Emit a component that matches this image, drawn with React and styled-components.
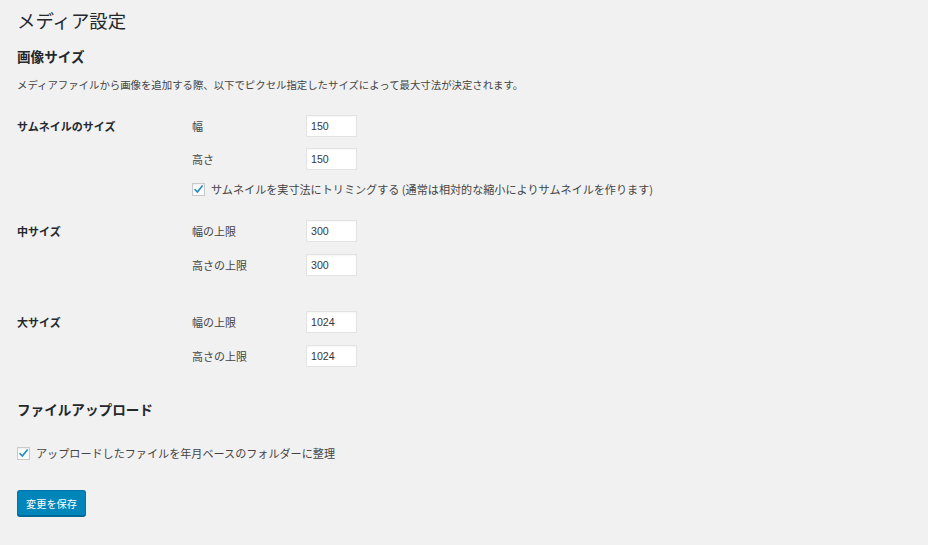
import React from "react";
import styled, { createGlobalStyle } from "styled-components";

const Global = createGlobalStyle`
  html, body { margin: 0; padding: 0; background: #f1f1f1; }
  body {
    font-family: "Noto Sans CJK JP", "Noto Sans", "Liberation Sans", sans-serif;
    color: #444;
    font-size: 10.4px;
  }
`;

const Page = styled.div`
  padding: 9px 17px 20px 17px;
  display: flex;
  flex-direction: column;
  width: 928px;
  height: 545px;
  box-sizing: border-box;
`;

const Title = styled.h1`
  margin: 0;
  font-size: 18.4px;
  line-height: 23px;
  font-weight: 400;
  color: #23282d;
`;

const SectionTitle = styled.h2`
  margin: ${(p) => p.$top}px 0 0 0;
  font-size: 13.6px;
  line-height: 18px;
  font-weight: 700;
  color: #23282d;
`;

const Description = styled.p`
  margin: 12px 0 0 0;
  font-size: 10.4px;
  line-height: 16px;
  color: #444;
`;

const SettingGroup = styled.div`
  display: flex;
  margin-top: ${(p) => p.$top}px;
`;

const GroupLabel = styled.div`
  width: 175px;
  flex: none;
  font-weight: 700;
  font-size: 11px;
  line-height: 22px;
  color: #23282d;
`;

const Fields = styled.div`
  display: flex;
  flex-direction: column;
  gap: ${(p) => p.$gap}px;
`;

const FieldRow = styled.label`
  display: flex;
  align-items: center;
  height: 22px;
`;

const FieldLabel = styled.span`
  width: 114px;
  flex: none;
  font-size: 11px;
  color: #444;
`;

const NumberInput = styled.input`
  width: 51px;
  height: 22px;
  box-sizing: border-box;
  border: 1px solid #e3e3e3;
  background: #fff;
  box-shadow: inset 0 1px 2px rgba(0, 0, 0, 0.04);
  padding: 0 4px;
  margin: 0;
  font-family: "Liberation Sans", "Noto Sans", sans-serif;
  font-size: 10.6px;
  color: #32373c;
  outline: none;
`;

const CheckRow = styled.label`
  display: flex;
  align-items: center;
  gap: 6px;
  height: 16px;
  margin-top: ${(p) => p.$top || 0}px;
  font-size: 11.1px;
  color: #444;
  white-space: nowrap;
`;

const CheckBox = styled.span`
  width: 13px;
  height: 13px;
  box-sizing: border-box;
  border: 1px solid #c9c9c9;
  background: #fff;
  box-shadow: inset 0 1px 2px rgba(0, 0, 0, 0.08);
  display: flex;
  align-items: center;
  justify-content: center;
  flex: none;
`;

const SaveButton = styled.button`
  margin-top: 29px;
  align-self: flex-start;
  width: 69px;
  height: 26px;
  box-sizing: border-box;
  background: #0085ba;
  border: 1px solid #0073aa;
  border-bottom-color: #006799;
  border-radius: 3px;
  box-shadow: 0 1px 0 #006799;
  color: #fff;
  font-family: "Noto Sans CJK JP", "Noto Sans", sans-serif;
  font-size: 10.2px;
  padding: 0;
  cursor: pointer;
`;

const Check = () => (
  <CheckBox>
    <svg width="11" height="11" viewBox="0 0 20 20">
      <path d="M4 10.5 L8 14.5 L16.5 4" fill="none" stroke="#1e8cbe" strokeWidth="3" strokeLinecap="square" />
    </svg>
  </CheckBox>
);

export default function App() {
  return (
    <>
      <Global />
      <Page>
        <Title>メディア設定</Title>
        <SectionTitle $top={15}>画像サイズ</SectionTitle>
        <Description>
          メディアファイルから画像を追加する際、以下でピクセル指定したサイズによって最大寸法が決定されます。
        </Description>

        <SettingGroup $top={22}>
          <GroupLabel>サムネイルのサイズ</GroupLabel>
          <Fields $gap={11}>
            <FieldRow>
              <FieldLabel>幅</FieldLabel>
              <NumberInput defaultValue="150" />
            </FieldRow>
            <FieldRow>
              <FieldLabel>高さ</FieldLabel>
              <NumberInput defaultValue="150" />
            </FieldRow>
            <CheckRow>
              <Check />
              サムネイルを実寸法にトリミングする (通常は相対的な縮小によりサムネイルを作ります)
            </CheckRow>
          </Fields>
        </SettingGroup>

        <SettingGroup $top={23}>
          <GroupLabel>中サイズ</GroupLabel>
          <Fields $gap={12}>
            <FieldRow>
              <FieldLabel>幅の上限</FieldLabel>
              <NumberInput defaultValue="300" />
            </FieldRow>
            <FieldRow>
              <FieldLabel>高さの上限</FieldLabel>
              <NumberInput defaultValue="300" />
            </FieldRow>
          </Fields>
        </SettingGroup>

        <SettingGroup $top={35}>
          <GroupLabel>大サイズ</GroupLabel>
          <Fields $gap={12}>
            <FieldRow>
              <FieldLabel>幅の上限</FieldLabel>
              <NumberInput defaultValue="1024" />
            </FieldRow>
            <FieldRow>
              <FieldLabel>高さの上限</FieldLabel>
              <NumberInput defaultValue="1024" />
            </FieldRow>
          </Fields>
        </SettingGroup>

        <SectionTitle $top={33}>ファイルアップロード</SectionTitle>
        <CheckRow $top={27}>
          <Check />
          アップロードしたファイルを年月ベースのフォルダーに整理
        </CheckRow>

        <SaveButton>変更を保存</SaveButton>
      </Page>
    </>
  );
}
